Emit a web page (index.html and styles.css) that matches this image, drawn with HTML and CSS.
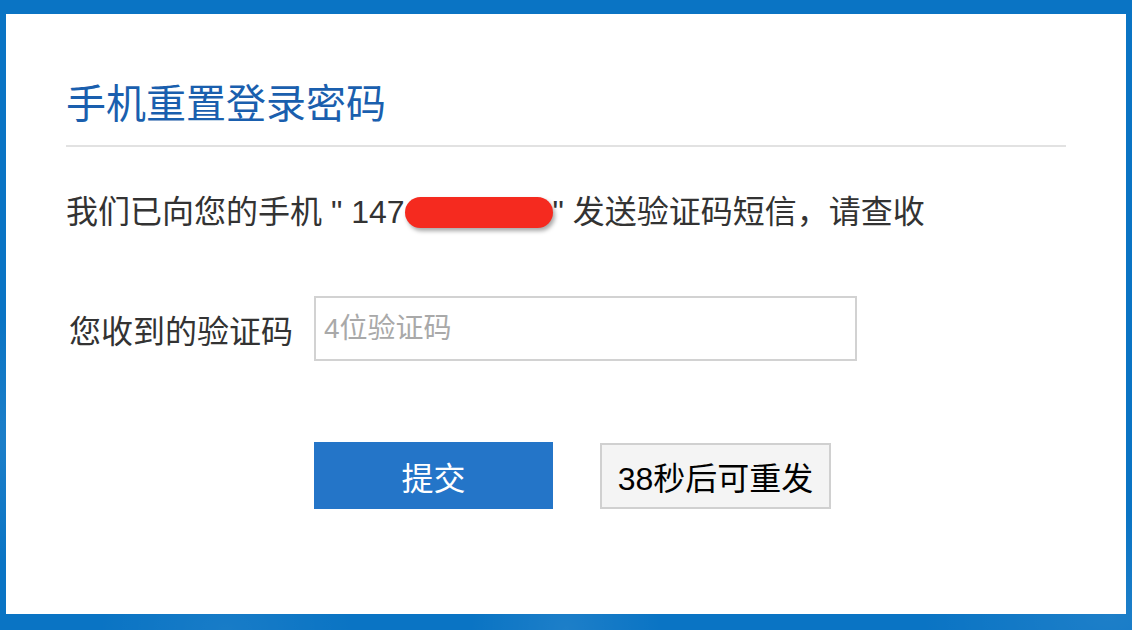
FILE: index.html
```html
<!DOCTYPE html>
<html lang="zh-CN">

<head>
    <meta charset="UTF-8">
    <meta name="viewport" content="width=device-width, initial-scale=1.0">
    <title>手机重置登录密码</title>
    <link rel="stylesheet" href="styles.css">
</head>

<body>
    <div class="panel">
        <h1 class="panel-title">手机重置登录密码</h1>

        <p class="notice">我们已向您的手机 " 147<span class="masked"></span>" 发送验证码短信，请查收</p>

        <div class="form-row">
            <label class="form-label" for="code">您收到的验证码</label>
            <input class="code-input" id="code" type="text" placeholder="4位验证码">
        </div>

        <div class="actions">
            <button class="btn btn-submit" type="button">提交</button>
            <button class="btn btn-resend" type="button" disabled>38秒后可重发</button>
        </div>
    </div>
</body>

</html>
```

FILE: styles.css
```css
html,
body {
    margin: 0;
    height: 100%;
}

body {
    font-family: 'Liberation Sans', 'Noto Sans CJK SC', sans-serif;
    color: #333;
    background-color: #0a74c4;
    background-image:
        radial-gradient(ellipse at 3% 70%, rgba(255, 255, 255, 0.08), transparent 20%),
        radial-gradient(ellipse at 20% 100%, rgba(255, 255, 255, 0.06), transparent 10%),
        radial-gradient(ellipse at 50% 100%, rgba(255, 255, 255, 0.08), transparent 12%),
        radial-gradient(ellipse at 98% 98%, rgba(255, 255, 255, 0.08), transparent 12%);
    padding-top: 14px;
    box-sizing: border-box;
    overflow: hidden;
}

.panel {
    background-color: #fff;
    margin: 0 6px;
    height: 600px;
    padding: 0 60px;
    box-sizing: border-box;
    overflow: hidden;
}

.panel-title {
    font-size: 40px;
    line-height: 48px;
    font-weight: normal;
    color: #1a5fae;
    margin: 66px 0 0;
    padding-bottom: 17px;
    border-bottom: 2px solid #e2e2e2;
}

.notice {
    font-size: 32px;
    line-height: 40px;
    margin: 45px 0 0;
    white-space: nowrap;
}

.masked {
    display: inline-block;
    width: 148px;
    height: 31px;
    border-radius: 16px;
    background-color: #f52a1f;
    box-shadow: 2px 3px 4px rgba(0, 0, 0, 0.35);
    vertical-align: -5px;
}

.form-row {
    display: flex;
    align-items: center;
    margin-top: 64px;
}

.form-label {
    font-size: 32px;
    width: 248px;
    padding-left: 3px;
    box-sizing: border-box;
}

.code-input {
    width: 543px;
    height: 65px;
    box-sizing: border-box;
    border: 2px solid #d2d2d2;
    padding: 0 8px;
    font-family: 'Liberation Sans', 'Noto Sans CJK SC', sans-serif;
    font-size: 28px;
    color: #333;
    outline: none;
}

.code-input::placeholder {
    color: #a9a9a9;
}

.actions {
    display: flex;
    gap: 47px;
    margin-top: 81px;
    padding-left: 248px;
}

.btn {
    font-family: 'Liberation Sans', 'Noto Sans CJK SC', sans-serif;
    font-size: 32px;
    height: 67px;
    padding: 0;
    box-sizing: border-box;
    cursor: pointer;
}

.btn-submit {
    width: 239px;
    border: none;
    background-color: #2475c8;
    color: #fff;
}

.btn-resend {
    width: 231px;
    height: 66px;
    margin-top: 1px;
    border: 2px solid #d0d0d0;
    background-color: #f4f4f4;
    color: #000;
    cursor: default;
}
```
